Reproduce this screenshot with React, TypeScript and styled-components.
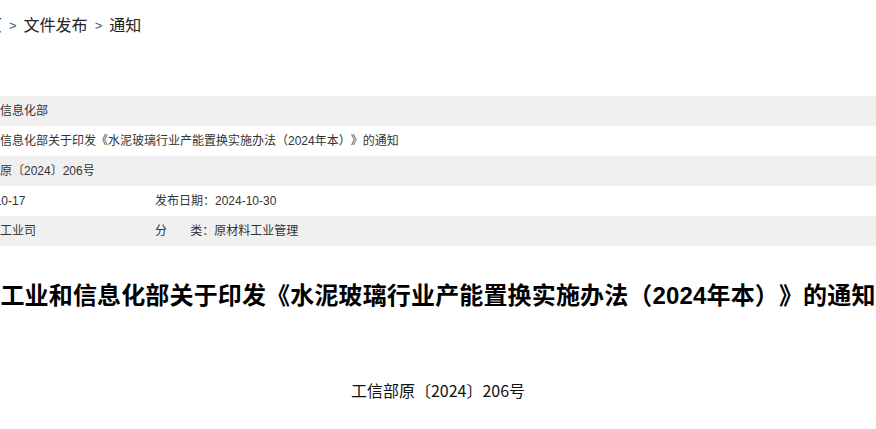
import React from "react";
import styled, { createGlobalStyle } from "styled-components";

const GlobalStyle = createGlobalStyle`
  html, body {
    margin: 0;
    padding: 0;
    background: #fff;
  }
  body {
    font-family: "Liberation Sans", "Noto Sans CJK SC", sans-serif;
    color: #333;
    text-spacing-trim: space-all;
  }
`;

const Page = styled.div`
  width: 876px;
  overflow: hidden;
`;

const Inner = styled.div`
  width: 960px;
  margin-left: -42px;
`;

const Crumbs = styled.div`
  display: flex;
  align-items: center;
  gap: 7px;
  padding: 16px 0 0 12px;
  line-height: 20px;
  font-size: 16px;
  color: #222;
`;

const Sep = styled.span`
  color: #3c5a7c;
  font-size: 13px;
`;

const Table = styled.div`
  margin-top: 60px;
  font-size: 12px;
  color: #333;
`;

const Row = styled.div<{ $shade?: boolean }>`
  display: grid;
  grid-template-columns: 191px 1fr;
  height: 30px;
  line-height: 30px;
  padding-left: 6px;
  background: ${(p) => (p.$shade ? "#f0f0f0" : "#fff")};
`;

const Cell = styled.div<{ $full?: boolean }>`
  white-space: nowrap;
  grid-column: ${(p) => (p.$full ? "1 / -1" : "auto")};
`;

const Title = styled.h1`
  margin: 32px 0 0;
  text-align: center;
  font-size: 24px;
  line-height: 36px;
  font-weight: bold;
  letter-spacing: 0.15px;
  color: #000;
  white-space: nowrap;
`;

const DocNo = styled.div`
  margin-top: 64px;
  text-align: center;
  font-family: "Noto Sans CJK SC", sans-serif;
  font-size: 16px;
  line-height: 24px;
  color: #111;
`;

export default function App() {
  return (
    <Page>
      <GlobalStyle />
      <Inner>
        <Crumbs>
          <span>首页</span>
          <Sep>&gt;</Sep>
          <span>文件发布</span>
          <Sep>&gt;</Sep>
          <span>通知</span>
        </Crumbs>
        <Table>
          <Row $shade>
            <Cell $full>工业和信息化部</Cell>
          </Row>
          <Row>
            <Cell $full>
              工业和信息化部关于印发《水泥玻璃行业产能置换实施办法（2024年本）》的通知
            </Cell>
          </Row>
          <Row $shade>
            <Cell $full>工信部原〔2024〕206号</Cell>
          </Row>
          <Row>
            <Cell>2024-10-17</Cell>
            <Cell>发布日期：2024-10-30</Cell>
          </Row>
          <Row $shade>
            <Cell>原材料工业司</Cell>
            <Cell>分&nbsp;&nbsp;&nbsp;&nbsp;&nbsp;&nbsp;&nbsp;类：原材料工业管理</Cell>
          </Row>
        </Table>
        <Title>
          工业和信息化部关于印发《水泥玻璃行业产能置换实施办法（2024年本）》的通知
        </Title>
        <DocNo>工信部原〔2024〕206号</DocNo>
      </Inner>
    </Page>
  );
}
